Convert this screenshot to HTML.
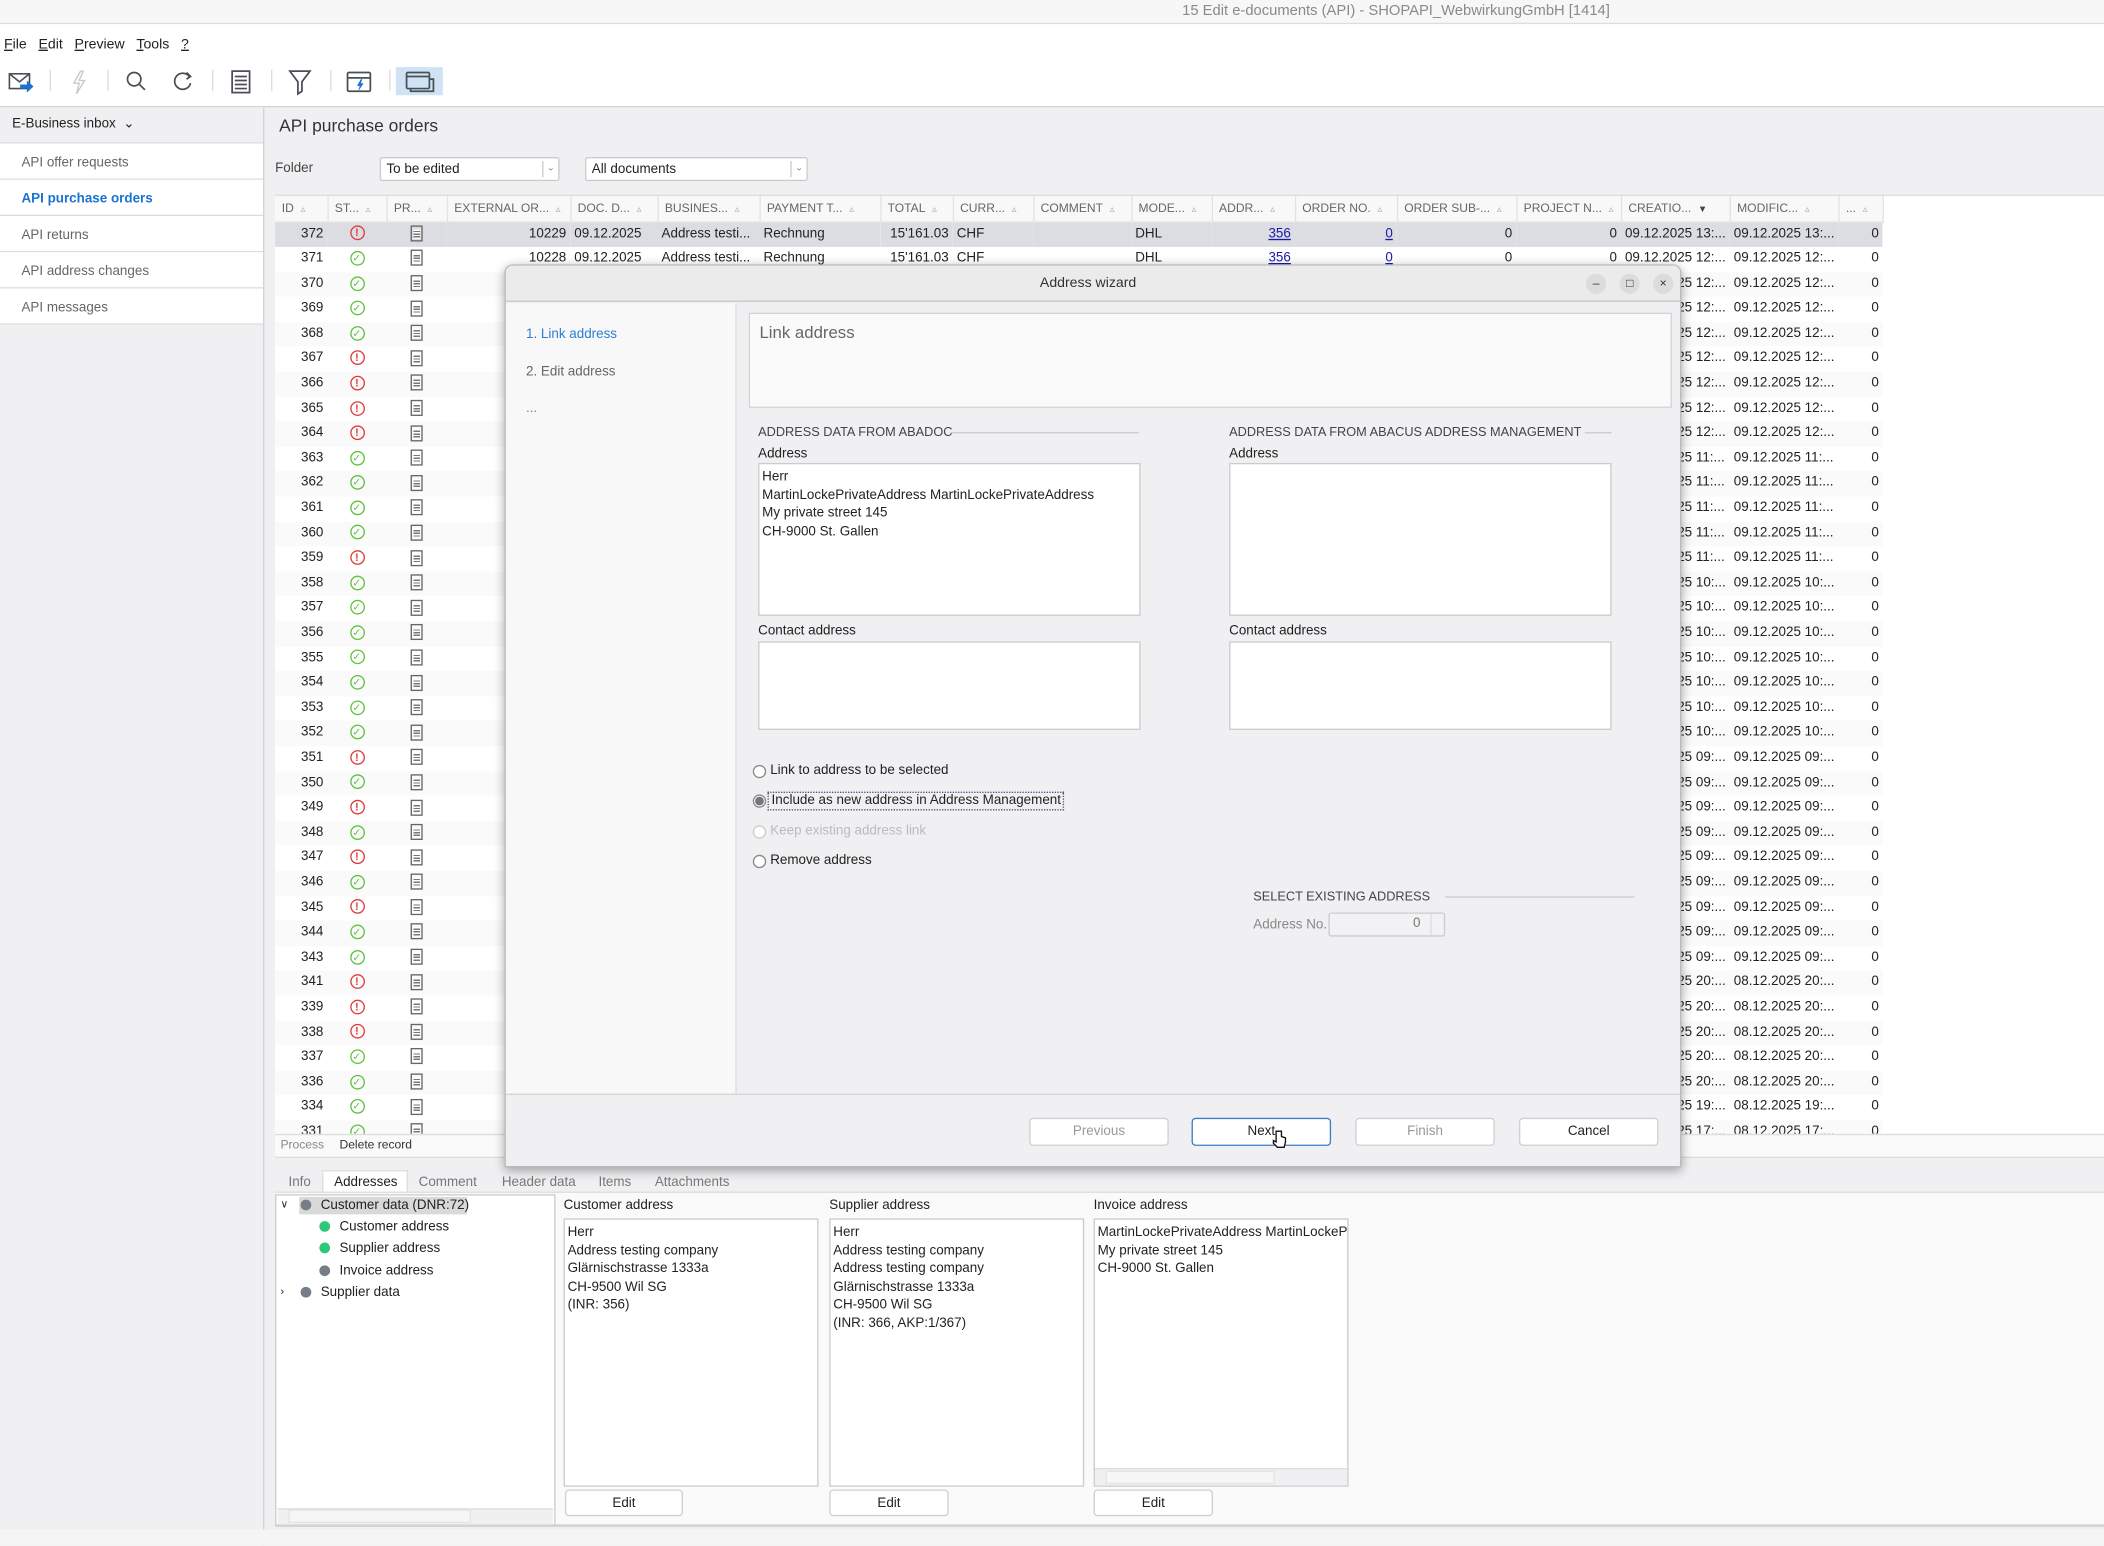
<!DOCTYPE html>
<html><head><meta charset="utf-8">
<style>
*{box-sizing:border-box;margin:0;padding:0}
html,body{width:2104px;height:1546px;overflow:hidden;background:#f0f0f2}
#w{position:absolute;left:0;top:0;width:1568px;height:1152px;transform:scale(1.34184);transform-origin:0 0;font-family:"Liberation Sans",sans-serif;font-size:10px;color:#222;background:#f0f0f2;overflow:hidden}
.a{position:absolute}
.t{white-space:nowrap}
#title{left:0;top:0;width:1568px;height:18px;background:#f7f7f7;border-bottom:1px solid #ddd}
#menu{left:0;top:18px;width:1568px;height:62px;background:#fff;border-bottom:1px solid #d4d4d4}
.sep{position:absolute;top:52px;width:1px;height:16px;background:#ddd}
#side{left:0;top:80px;width:197px;height:1072px;background:#f0f0f2;border-right:1px solid #d4d4d4}
.si{position:absolute;left:0;width:196px;height:27px;background:#fff;border-bottom:1px solid #ddd;padding:9px 0 0 16px;color:#666}
.combo{position:absolute;height:18px;background:#fff;border:1px solid #ccc;border-radius:2px;padding:3px 4px;font-size:10px}
.combo b{position:absolute;right:0;top:2px;width:12px;height:12px;border-left:1px solid #ccc;font-weight:normal;font-size:7px;color:#888;text-align:center;line-height:12px}
#grid{left:205px;top:145px;width:1363px;height:700px;background:#fff;overflow:hidden;border-top:1px solid #ddd}
table{border-collapse:collapse;table-layout:fixed}
td{height:18.6px;line-height:18.6px;white-space:nowrap;overflow:hidden;padding:0 3px;font-size:10px}
th{height:19px;font-weight:normal;color:#666;font-size:9px;text-align:left;padding:0 5px;border-right:1px solid #e2e2e2;background:#f8f8f8;white-space:nowrap;overflow:hidden;border-bottom:1px solid #e4e4e4}
th i{font-style:normal;color:#aaa;font-size:7px;margin-left:5px}
tr:nth-child(odd) td{background:#fff}
tr:nth-child(even) td{background:#fafafa}
tr.s td{background:#dcdde2!important}
.r{text-align:right}
.st{display:inline-block;width:11px;height:11px;border-radius:50%;border:1px solid #e03c3c;color:#e03c3c;font-size:8px;line-height:9px;text-align:center;font-weight:bold;vertical-align:middle}
.ok{border-color:#5fc340;color:#5fc340;font-weight:normal;font-size:8px}
.dc{display:inline-block;width:9px;height:12px;border:1px solid #666;vertical-align:middle;background:repeating-linear-gradient(#fff 0 1px,#777 1px 2px);background-clip:content-box;padding:2px 1px 1px}
.lk{color:#1a1aa6;text-decoration:underline}
#dlg{left:376px;top:197px;width:877px;height:673px;background:#f0f0f2;border:1px solid #bbb;border-radius:6px 6px 0 0;box-shadow:0 2px 8px rgba(0,0,0,.35);overflow:hidden}
.box{position:absolute;background:#fff;border:1px solid #ccc}
.hd{position:absolute;font-size:9.5px;color:#444;white-space:nowrap}
.line{position:absolute;height:1px;background:#ccc}
.rad{position:absolute;width:10px;height:10px;border-radius:50%;border:1px solid #888;background:#fff}
.btn{position:absolute;height:21px;border:1px solid #d0d0d0;border-radius:3px;background:#fff;text-align:center;line-height:19px;font-size:10px}
.cc{position:absolute;top:6px;width:15px;height:15px;border-radius:50%;background:#dcdcdc;text-align:center;line-height:14px;font-size:9px;color:#333}
.bt{position:absolute;top:876px;font-size:10px;color:#777}
.dot{display:inline-block;width:8px;height:8px;border-radius:50%;background:#777d86;margin-right:7px;vertical-align:-1px}
.g{background:#2fc77a}
.tl{position:absolute;font-size:10px;white-space:nowrap}
</style></head><body><div id="w">

<div id="title" class="a"><div class="a t" style="left:881px;top:2px;color:#8a8a8a;font-size:11px">15 Edit e-documents (API) - SHOPAPI_WebwirkungGmbH [1414]</div></div>

<div id="menu" class="a">
 <div class="a t" style="left:3px;top:9px;font-size:10.5px"><u>F</u>ile&nbsp;&nbsp;&nbsp;<u>E</u>dit&nbsp;&nbsp;&nbsp;<u>P</u>review&nbsp;&nbsp;&nbsp;<u>T</u>ools&nbsp;&nbsp;&nbsp;<u>?</u></div>
</div>
<div class="a" style="left:295px;top:50px;width:35px;height:21px;background:#cfe3f5"></div>
<svg class="a" style="left:0;top:48px" width="340" height="26" viewBox="0 0 340 26">
 <g fill="none" stroke="#4a4f56" stroke-width="1.2">
  <rect x="7" y="7" width="15" height="11"/><path d="M7 7l7.5 6L22 7"/>
 </g>
 <path d="M15 15h5v-3l5 4.5-5 4.5v-3h-5z" fill="#1e73d2"/>
 <path d="M60 5l-5 9h4l-2 8 6-10h-4l3-7z" fill="none" stroke="#c8c8c8" stroke-width="1"/>
 <g fill="none" stroke="#4a4f56" stroke-width="1.3">
  <circle cx="100" cy="11" r="5"/><path d="M104 15l4 4"/>
  <path d="M141 9a6 6 0 1 0 1 5"/><path d="M139 6l3 3-3 2"/>
  <rect x="173" y="5" width="13" height="16"/><path d="M175 9h9M175 12h9M175 15h9M175 18h9"/>
  <path d="M216 5h15l-6 8v7l-3 2v-9z"/>
  <rect x="259" y="6" width="17" height="14" rx="1"/><path d="M259 10h17"/>
  <rect x="303" y="6" width="17" height="12" rx="1"/><path d="M303 9h17"/><path d="M306 18v2h17V11h-3"/>
 </g>
 <path d="M269 11l-3 5h2l-1 4 4-6h-2l1-3z" fill="#1e73d2"/>
</svg>
<div class="sep" style="left:37px"></div><div class="sep" style="left:80px"></div><div class="sep" style="left:158px"></div><div class="sep" style="left:202px"></div><div class="sep" style="left:246px"></div><div class="sep" style="left:290px"></div>

<div id="side" class="a">
 <div class="a t" style="left:9px;top:7px;font-size:10px">E-Business inbox &nbsp;⌄</div>
 <div class="a" style="left:0;top:26px;width:196px;height:1px;background:#ddd"></div>
 <div class="si" style="top:27px">API offer requests</div>
 <div class="si" style="top:54px;color:#1a73d0;font-weight:bold">API purchase orders</div>
 <div class="si" style="top:81px">API returns</div>
 <div class="si" style="top:108px">API address changes</div>
 <div class="si" style="top:135px">API messages</div>
</div>

<div class="a t" style="left:208px;top:86px;font-size:13px;color:#333">API purchase orders</div>
<div class="a t" style="left:205px;top:120px;color:#444">Folder</div>
<div class="combo" style="left:283px;top:117px;width:134px">To be edited<b>⌄</b></div>
<div class="combo" style="left:436px;top:117px;width:166px">All documents<b>⌄</b></div>

<div id="grid" class="a">
<table>
<colgroup><col style="width:39px"><col style="width:44px"><col style="width:45px"><col style="width:92px"><col style="width:65px"><col style="width:76px"><col style="width:90px"><col style="width:54px"><col style="width:60px"><col style="width:73px"><col style="width:60px"><col style="width:62px"><col style="width:76px"><col style="width:89px"><col style="width:78px"><col style="width:69px"><col style="width:76px"><col style="width:33px"></colgroup>
<tr><th>ID<i>▵</i></th><th>ST...<i>▵</i></th><th>PR...<i>▵</i></th><th>EXTERNAL OR...<i>▵</i></th><th>DOC. D...<i>▵</i></th><th>BUSINES...<i>▵</i></th><th>PAYMENT T...<i>▵</i></th><th>TOTAL<i>▵</i></th><th>CURR...<i>▵</i></th><th>COMMENT<i>▵</i></th><th>MODE...<i>▵</i></th><th>ADDR...<i>▵</i></th><th>ORDER NO.<i>▵</i></th><th>ORDER SUB-...<i>▵</i></th><th>PROJECT N...<i>▵</i></th><th>CREATIO...<i style="color:#444">▼</i></th><th>MODIFIC...<i>▵</i></th><th>...<i>▵</i></th></tr>
<tr class="s"><td class="r">372</td><td style="text-align:center"><span class="st">!</span></td><td style="text-align:center"><span class="dc"></span></td><td class="r">10229</td><td>09.12.2025</td><td>Address testi...</td><td>Rechnung</td><td class="r">15'161.03</td><td>CHF</td><td></td><td>DHL</td><td class="r"><span class="lk">356</span></td><td class="r"><span class="lk">0</span></td><td class="r">0</td><td class="r">0</td><td>09.12.2025 13:...</td><td>09.12.2025 13:...</td><td class="r">0</td></tr>
<tr><td class="r">371</td><td style="text-align:center"><span class="st ok">✓</span></td><td style="text-align:center"><span class="dc"></span></td><td class="r">10228</td><td>09.12.2025</td><td>Address testi...</td><td>Rechnung</td><td class="r">15'161.03</td><td>CHF</td><td></td><td>DHL</td><td class="r"><span class="lk">356</span></td><td class="r"><span class="lk">0</span></td><td class="r">0</td><td class="r">0</td><td>09.12.2025 12:...</td><td>09.12.2025 12:...</td><td class="r">0</td></tr>
<tr><td class="r">370</td><td style="text-align:center"><span class="st ok">✓</span></td><td style="text-align:center"><span class="dc"></span></td><td colspan="12"></td><td>09.12.2025 12:...</td><td>09.12.2025 12:...</td><td class="r">0</td></tr>
<tr><td class="r">369</td><td style="text-align:center"><span class="st ok">✓</span></td><td style="text-align:center"><span class="dc"></span></td><td colspan="12"></td><td>09.12.2025 12:...</td><td>09.12.2025 12:...</td><td class="r">0</td></tr>
<tr><td class="r">368</td><td style="text-align:center"><span class="st ok">✓</span></td><td style="text-align:center"><span class="dc"></span></td><td colspan="12"></td><td>09.12.2025 12:...</td><td>09.12.2025 12:...</td><td class="r">0</td></tr>
<tr><td class="r">367</td><td style="text-align:center"><span class="st">!</span></td><td style="text-align:center"><span class="dc"></span></td><td colspan="12"></td><td>09.12.2025 12:...</td><td>09.12.2025 12:...</td><td class="r">0</td></tr>
<tr><td class="r">366</td><td style="text-align:center"><span class="st">!</span></td><td style="text-align:center"><span class="dc"></span></td><td colspan="12"></td><td>09.12.2025 12:...</td><td>09.12.2025 12:...</td><td class="r">0</td></tr>
<tr><td class="r">365</td><td style="text-align:center"><span class="st">!</span></td><td style="text-align:center"><span class="dc"></span></td><td colspan="12"></td><td>09.12.2025 12:...</td><td>09.12.2025 12:...</td><td class="r">0</td></tr>
<tr><td class="r">364</td><td style="text-align:center"><span class="st">!</span></td><td style="text-align:center"><span class="dc"></span></td><td colspan="12"></td><td>09.12.2025 12:...</td><td>09.12.2025 12:...</td><td class="r">0</td></tr>
<tr><td class="r">363</td><td style="text-align:center"><span class="st ok">✓</span></td><td style="text-align:center"><span class="dc"></span></td><td colspan="12"></td><td>09.12.2025 11:...</td><td>09.12.2025 11:...</td><td class="r">0</td></tr>
<tr><td class="r">362</td><td style="text-align:center"><span class="st ok">✓</span></td><td style="text-align:center"><span class="dc"></span></td><td colspan="12"></td><td>09.12.2025 11:...</td><td>09.12.2025 11:...</td><td class="r">0</td></tr>
<tr><td class="r">361</td><td style="text-align:center"><span class="st ok">✓</span></td><td style="text-align:center"><span class="dc"></span></td><td colspan="12"></td><td>09.12.2025 11:...</td><td>09.12.2025 11:...</td><td class="r">0</td></tr>
<tr><td class="r">360</td><td style="text-align:center"><span class="st ok">✓</span></td><td style="text-align:center"><span class="dc"></span></td><td colspan="12"></td><td>09.12.2025 11:...</td><td>09.12.2025 11:...</td><td class="r">0</td></tr>
<tr><td class="r">359</td><td style="text-align:center"><span class="st">!</span></td><td style="text-align:center"><span class="dc"></span></td><td colspan="12"></td><td>09.12.2025 11:...</td><td>09.12.2025 11:...</td><td class="r">0</td></tr>
<tr><td class="r">358</td><td style="text-align:center"><span class="st ok">✓</span></td><td style="text-align:center"><span class="dc"></span></td><td colspan="12"></td><td>09.12.2025 10:...</td><td>09.12.2025 10:...</td><td class="r">0</td></tr>
<tr><td class="r">357</td><td style="text-align:center"><span class="st ok">✓</span></td><td style="text-align:center"><span class="dc"></span></td><td colspan="12"></td><td>09.12.2025 10:...</td><td>09.12.2025 10:...</td><td class="r">0</td></tr>
<tr><td class="r">356</td><td style="text-align:center"><span class="st ok">✓</span></td><td style="text-align:center"><span class="dc"></span></td><td colspan="12"></td><td>09.12.2025 10:...</td><td>09.12.2025 10:...</td><td class="r">0</td></tr>
<tr><td class="r">355</td><td style="text-align:center"><span class="st ok">✓</span></td><td style="text-align:center"><span class="dc"></span></td><td colspan="12"></td><td>09.12.2025 10:...</td><td>09.12.2025 10:...</td><td class="r">0</td></tr>
<tr><td class="r">354</td><td style="text-align:center"><span class="st ok">✓</span></td><td style="text-align:center"><span class="dc"></span></td><td colspan="12"></td><td>09.12.2025 10:...</td><td>09.12.2025 10:...</td><td class="r">0</td></tr>
<tr><td class="r">353</td><td style="text-align:center"><span class="st ok">✓</span></td><td style="text-align:center"><span class="dc"></span></td><td colspan="12"></td><td>09.12.2025 10:...</td><td>09.12.2025 10:...</td><td class="r">0</td></tr>
<tr><td class="r">352</td><td style="text-align:center"><span class="st ok">✓</span></td><td style="text-align:center"><span class="dc"></span></td><td colspan="12"></td><td>09.12.2025 10:...</td><td>09.12.2025 10:...</td><td class="r">0</td></tr>
<tr><td class="r">351</td><td style="text-align:center"><span class="st">!</span></td><td style="text-align:center"><span class="dc"></span></td><td colspan="12"></td><td>09.12.2025 09:...</td><td>09.12.2025 09:...</td><td class="r">0</td></tr>
<tr><td class="r">350</td><td style="text-align:center"><span class="st ok">✓</span></td><td style="text-align:center"><span class="dc"></span></td><td colspan="12"></td><td>09.12.2025 09:...</td><td>09.12.2025 09:...</td><td class="r">0</td></tr>
<tr><td class="r">349</td><td style="text-align:center"><span class="st">!</span></td><td style="text-align:center"><span class="dc"></span></td><td colspan="12"></td><td>09.12.2025 09:...</td><td>09.12.2025 09:...</td><td class="r">0</td></tr>
<tr><td class="r">348</td><td style="text-align:center"><span class="st ok">✓</span></td><td style="text-align:center"><span class="dc"></span></td><td colspan="12"></td><td>09.12.2025 09:...</td><td>09.12.2025 09:...</td><td class="r">0</td></tr>
<tr><td class="r">347</td><td style="text-align:center"><span class="st">!</span></td><td style="text-align:center"><span class="dc"></span></td><td colspan="12"></td><td>09.12.2025 09:...</td><td>09.12.2025 09:...</td><td class="r">0</td></tr>
<tr><td class="r">346</td><td style="text-align:center"><span class="st ok">✓</span></td><td style="text-align:center"><span class="dc"></span></td><td colspan="12"></td><td>09.12.2025 09:...</td><td>09.12.2025 09:...</td><td class="r">0</td></tr>
<tr><td class="r">345</td><td style="text-align:center"><span class="st">!</span></td><td style="text-align:center"><span class="dc"></span></td><td colspan="12"></td><td>09.12.2025 09:...</td><td>09.12.2025 09:...</td><td class="r">0</td></tr>
<tr><td class="r">344</td><td style="text-align:center"><span class="st ok">✓</span></td><td style="text-align:center"><span class="dc"></span></td><td colspan="12"></td><td>09.12.2025 09:...</td><td>09.12.2025 09:...</td><td class="r">0</td></tr>
<tr><td class="r">343</td><td style="text-align:center"><span class="st ok">✓</span></td><td style="text-align:center"><span class="dc"></span></td><td colspan="12"></td><td>09.12.2025 09:...</td><td>09.12.2025 09:...</td><td class="r">0</td></tr>
<tr><td class="r">341</td><td style="text-align:center"><span class="st">!</span></td><td style="text-align:center"><span class="dc"></span></td><td colspan="12"></td><td>08.12.2025 20:...</td><td>08.12.2025 20:...</td><td class="r">0</td></tr>
<tr><td class="r">339</td><td style="text-align:center"><span class="st">!</span></td><td style="text-align:center"><span class="dc"></span></td><td colspan="12"></td><td>08.12.2025 20:...</td><td>08.12.2025 20:...</td><td class="r">0</td></tr>
<tr><td class="r">338</td><td style="text-align:center"><span class="st">!</span></td><td style="text-align:center"><span class="dc"></span></td><td colspan="12"></td><td>08.12.2025 20:...</td><td>08.12.2025 20:...</td><td class="r">0</td></tr>
<tr><td class="r">337</td><td style="text-align:center"><span class="st ok">✓</span></td><td style="text-align:center"><span class="dc"></span></td><td colspan="12"></td><td>08.12.2025 20:...</td><td>08.12.2025 20:...</td><td class="r">0</td></tr>
<tr><td class="r">336</td><td style="text-align:center"><span class="st ok">✓</span></td><td style="text-align:center"><span class="dc"></span></td><td colspan="12"></td><td>08.12.2025 20:...</td><td>08.12.2025 20:...</td><td class="r">0</td></tr>
<tr><td class="r">334</td><td style="text-align:center"><span class="st ok">✓</span></td><td style="text-align:center"><span class="dc"></span></td><td colspan="12"></td><td>08.12.2025 19:...</td><td>08.12.2025 19:...</td><td class="r">0</td></tr>
<tr><td class="r">331</td><td style="text-align:center"><span class="st ok">✓</span></td><td style="text-align:center"><span class="dc"></span></td><td colspan="12"></td><td>08.12.2025 17:...</td><td>08.12.2025 17:...</td><td class="r">0</td></tr>
</table>
</div>
<div class="a" style="left:205px;top:845px;width:1363px;height:18px;background:#fafafa;border-top:1px solid #ddd;border-bottom:1px solid #ddd"></div>
<div class="a t" style="left:209px;top:848px;color:#888;font-size:9px">Process</div>
<div class="a t" style="left:253px;top:848px;color:#333;font-size:9px">Delete record</div>

<!-- bottom -->
<div class="a" style="left:240px;top:872px;width:64px;height:17px;background:#fff;border:1px solid #ddd;border-bottom:none"></div>
<div class="bt" style="left:215px">Info</div><div class="bt" style="left:249px;color:#222">Addresses</div><div class="bt" style="left:312px">Comment</div><div class="bt" style="left:374px">Header data</div><div class="bt" style="left:446px">Items</div><div class="bt" style="left:488px">Attachments</div>
<div class="a" style="left:205px;top:888px;width:1363px;height:250px;background:#fafafa;border-top:1px solid #ddd;border-bottom:2px solid #d4d4d4"></div>
<div class="box" style="left:205px;top:890px;width:209px;height:247px"></div>
<div class="a" style="left:223px;top:892px;width:125px;height:13px;background:#d9d9d9"></div>
<div class="tl" style="left:209px;top:893px;font-size:8px">∨</div>
<div class="tl" style="left:224px;top:893px"><span class="dot"></span>Customer data (DNR:72)</div>
<div class="tl" style="left:238px;top:909px"><span class="dot g"></span>Customer address</div>
<div class="tl" style="left:238px;top:925px"><span class="dot g"></span>Supplier address</div>
<div class="tl" style="left:238px;top:942px"><span class="dot"></span>Invoice address</div>
<div class="tl" style="left:209px;top:958px;font-size:8px">›</div>
<div class="tl" style="left:224px;top:958px"><span class="dot"></span>Supplier data</div>
<div class="a" style="left:207px;top:1124px;width:205px;height:12px;background:#f0f0f2;border-top:1px solid #ddd"></div>
<div class="a" style="left:215px;top:1125px;width:136px;height:10px;background:#f6f6f7;border:1px solid #e4e4e4"></div>

<div class="tl" style="left:420px;top:893px">Customer address</div>
<div class="box" style="left:420px;top:908px;width:190px;height:200px"></div>
<div class="tl" style="left:423px;top:912px;line-height:13.5px">Herr<br>Address testing company<br>Glärnischstrasse 1333a<br>CH-9500 Wil SG<br>(INR: 356)</div>
<div class="btn" style="left:421px;top:1110px;width:88px;height:20px">Edit</div>
<div class="tl" style="left:618px;top:893px">Supplier address</div>
<div class="box" style="left:618px;top:908px;width:190px;height:200px"></div>
<div class="tl" style="left:621px;top:912px;line-height:13.5px">Herr<br>Address testing company<br>Address testing company<br>Glärnischstrasse 1333a<br>CH-9500 Wil SG<br>(INR: 366, AKP:1/367)</div>
<div class="btn" style="left:618px;top:1110px;width:89px;height:20px">Edit</div>
<div class="tl" style="left:815px;top:893px">Invoice address</div>
<div class="box" style="left:815px;top:908px;width:190px;height:200px;overflow:hidden"><div class="tl" style="left:2px;top:3px;line-height:13.5px">MartinLockePrivateAddress MartinLockePrivateAddress<br>My private street 145<br>CH-9000 St. Gallen</div>
<div class="a" style="left:0;top:185px;width:188px;height:13px;background:#f0f0f2;border-top:1px solid #ddd"></div><div class="a" style="left:8px;top:187px;width:126px;height:10px;background:#f6f6f7;border:1px solid #e4e4e4"></div></div>
<div class="btn" style="left:815px;top:1110px;width:89px;height:20px">Edit</div>
<div class="a" style="left:0;top:1140px;width:1568px;height:12px;background:#f5f5f6"></div>

<!-- dialog -->
<div id="dlg" class="a">
 <div class="a" style="left:0;top:0;width:877px;height:27px;background:#ebebeb;border-bottom:1px solid #c8c8c8"></div>
 <div class="a t" style="left:398px;top:7px;font-size:10.5px;color:#333">Address wizard</div>
 <div class="cc" style="left:805px">–</div><div class="cc" style="left:830px">□</div><div class="cc" style="left:855px">×</div>
 <div class="a" style="left:0;top:28px;width:172px;height:590px;background:#f8f8f8;border-right:1px solid #ddd"></div>
 <div class="a t" style="left:15px;top:46px;color:#2a7fd4">1. Link address</div>
 <div class="a t" style="left:15px;top:74px;color:#666">2. Edit address</div>
 <div class="a t" style="left:15px;top:101px;color:#888">...</div>
 <div class="a" style="left:181px;top:35px;width:688px;height:71px;background:#fafafa;border:1px solid #d4d4d4"></div>
 <div class="a t" style="left:189px;top:43px;font-size:12.5px;color:#666">Link address</div>

 <div class="hd" style="left:188px;top:119px">ADDRESS DATA FROM ABADOC</div>
 <div class="line" style="left:331px;top:124px;width:141px"></div>
 <div class="hd" style="left:188px;top:135px;color:#222;font-size:10px">Address</div>
 <div class="box" style="left:188px;top:147px;width:285px;height:114px"></div>
 <div class="tl" style="left:191px;top:151px;line-height:13.5px">Herr<br>MartinLockePrivateAddress MartinLockePrivateAddress<br>My private street 145<br>CH-9000 St. Gallen</div>
 <div class="hd" style="left:188px;top:267px;color:#222;font-size:10px">Contact address</div>
 <div class="box" style="left:188px;top:280px;width:285px;height:66px"></div>

 <div class="hd" style="left:539px;top:119px">ADDRESS DATA FROM ABACUS ADDRESS MANAGEMENT</div>
 <div class="line" style="left:804px;top:124px;width:20px"></div>
 <div class="hd" style="left:539px;top:135px;color:#222;font-size:10px">Address</div>
 <div class="box" style="left:539px;top:147px;width:285px;height:114px"></div>
 <div class="hd" style="left:539px;top:267px;color:#222;font-size:10px">Contact address</div>
 <div class="box" style="left:539px;top:280px;width:285px;height:66px"></div>

 <div class="rad" style="left:184px;top:372px"></div><div class="tl" style="left:197px;top:371px">Link to address to be selected</div>
 <div class="rad" style="left:184px;top:394px;background:radial-gradient(#777 0 3px,#fff 3.5px)"></div><div class="tl" style="left:195px;top:392px;border:1px dotted #557;padding:0 1px 1px 2px">Include as new address in Address Management</div>
 <div class="rad" style="left:184px;top:417px;border-color:#ccc"></div><div class="tl" style="left:197px;top:416px;color:#bbb">Keep existing address link</div>
 <div class="rad" style="left:184px;top:439px"></div><div class="tl" style="left:197px;top:438px">Remove address</div>

 <div class="hd" style="left:557px;top:465px">SELECT EXISTING ADDRESS</div>
 <div class="line" style="left:700px;top:470px;width:141px"></div>
 <div class="tl" style="left:557px;top:486px;color:#888">Address No.</div>
 <div class="a" style="left:613px;top:482px;width:87px;height:18px;background:#f2f2f4;border:1px solid #ccc;border-radius:2px"></div>
 <div class="tl" style="left:676px;top:485px;color:#777">0</div>
 <div class="a" style="left:689px;top:483px;width:1px;height:16px;background:#ddd"></div>

 <div class="line" style="left:0;top:617px;width:877px;background:#d4d4d4"></div>
 <div class="btn" style="left:390px;top:635px;width:104px;color:#999">Previous</div>
 <div class="btn" style="left:511px;top:635px;width:104px;border-color:#3b7fc8">Next</div>
 <div class="btn" style="left:633px;top:635px;width:104px;color:#999">Finish</div>
 <div class="btn" style="left:755px;top:635px;width:104px">Cancel</div>
 <svg class="a" style="left:571px;top:644px" width="12" height="14" viewBox="0 0 12 14"><path d="M3 1v8l-2-1v2l3 3h5l1-4V6l-3-1V1z" fill="#fff" stroke="#111" stroke-width="1"/></svg>
</div>

</div></body></html>
